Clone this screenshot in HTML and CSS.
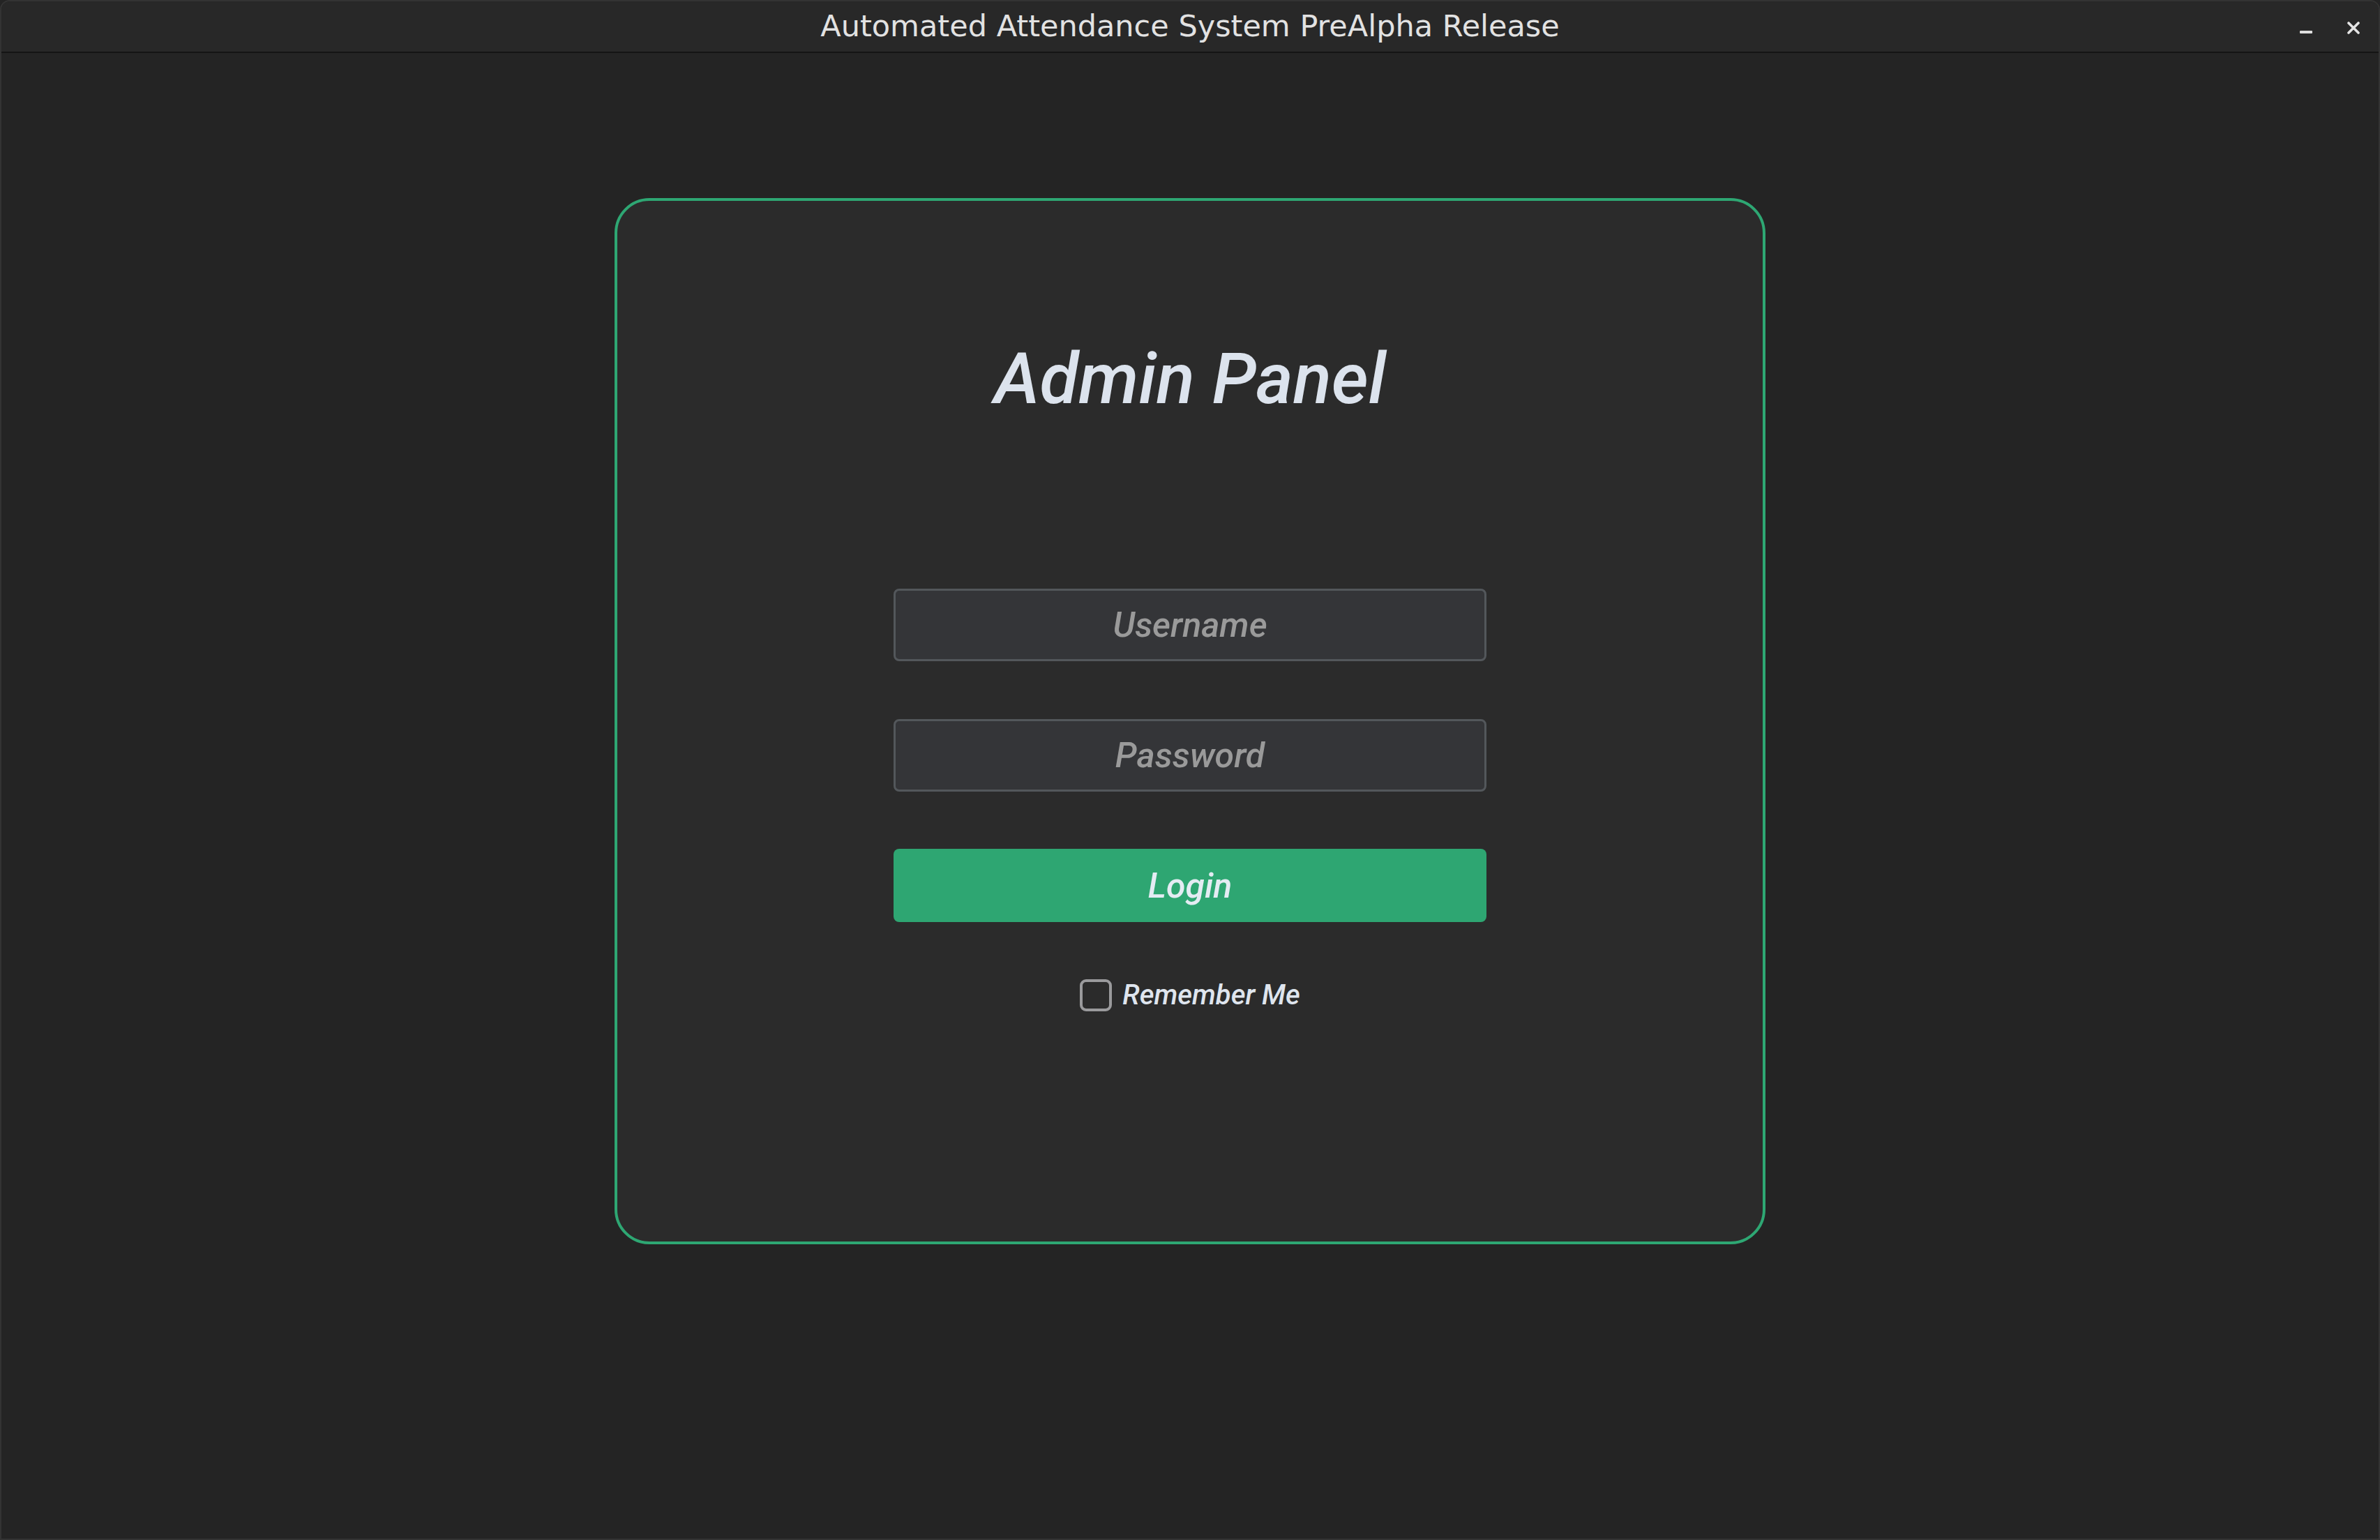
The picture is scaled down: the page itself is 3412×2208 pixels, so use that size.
FILE: index.html
```html
<!DOCTYPE html>
<html lang="en">
<head>
<meta charset="utf-8">
<title>Automated Attendance System PreAlpha Release</title>
<link rel="stylesheet" href="styles.css">
</head>
<body>
<div class="window">
  <header class="titlebar">
    <div class="spacer"></div>
    <h1 class="title">Automated Attendance System PreAlpha Release</h1>
    <div class="controls">
      <svg class="ctl" width="18" height="18" viewBox="0 0 18 18"><rect x="0" y="13" width="18" height="4" rx="1" fill="#dedede"/></svg>
      <svg class="ctl" width="18" height="18" viewBox="0 0 18 18"><path d="M2 2 L16 16 M16 2 L2 16" stroke="#e4e4e4" stroke-width="3.6" stroke-linecap="round"/></svg>
    </div>
  </header>
  <main class="content">
    <section class="card">
      <div class="heading-row"><h2 class="heading">Admin Panel</h2></div>
      <form class="form">
        <input class="field" type="text" placeholder="Username">
        <input class="field field-second" type="password" placeholder="Password">
        <button class="login" type="button">Login</button>
        <label class="remember"><span class="box"></span><span class="remember-text">Remember Me</span></label>
      </form>
    </section>
  </main>
</div>
</body>
</html>
```
FILE: styles.css
```css
html, body {
  margin: 0;
  padding: 0;
  background: #242424;
  height: 100%;
}
.window {
  box-sizing: border-box;
  height: 100vh;
  border: 2px solid #333333;
  border-radius: 14px 14px 0 0;
  background: #242424;
  overflow: hidden;
  display: flex;
  flex-direction: column;
}
.titlebar {
  flex: none;
  height: 72px;
  border-bottom: 2px solid #141414;
  background: #282828;
  display: grid;
  grid-template-columns: 1fr auto 1fr;
  align-items: center;
}
.title {
  margin: 0;
  font-family: "DejaVu Sans", sans-serif;
  font-weight: normal;
  font-size: 43px;
  color: #e2e2e2;
  letter-spacing: 0;
  padding-bottom: 2px;
}
.controls {
  justify-self: end;
  display: flex;
  align-items: center;
  gap: 50px;
  padding-right: 27px;
  padding-top: 4px;
}
.ctl { display: block; }
.content {
  flex: 1;
}
.card {
  box-sizing: border-box;
  width: 1650px;
  height: 1500px;
  margin: 208px auto 0;
  border: 4px solid #2ea773;
  border-radius: 50px;
  background: #2b2b2b;
  padding-top: 204px;
}
.heading-row {
  text-align: center;
}
.heading {
  display: inline-block;
  margin: 0;
  font-family: Roboto, "Liberation Sans", sans-serif;
  font-style: italic;
  font-weight: 500;
  font-size: 102px;
  line-height: 102px;
  color: #dce3ed;
}
.form {
  width: 850px;
  margin: 250px auto 0;
  display: flex;
  flex-direction: column;
  align-items: stretch;
}
.field {
  box-sizing: border-box;
  height: 104px;
  margin: 0;
  border: 3px solid #53575b;
  border-radius: 8px;
  background: #343538;
  text-align: center;
  font-family: Roboto, "Liberation Sans", sans-serif;
  font-style: italic;
  font-weight: 500;
  font-size: 50px;
  color: #dddddd;
  outline: none;
}
.field::placeholder {
  color: #9a9a9a;
}
.field-second {
  margin-top: 83px;
}
.login {
  box-sizing: border-box;
  height: 105px;
  margin-top: 82px;
  border: none;
  border-radius: 8px;
  background: #2ea672;
  font-family: Roboto, "Liberation Sans", sans-serif;
  font-style: italic;
  font-weight: 500;
  font-size: 50px;
  color: #e4ecf3;
  padding: 0;
}
.remember {
  margin-top: 81px;
  display: flex;
  justify-content: center;
  align-items: center;
  gap: 15px;
  font-family: Roboto, "Liberation Sans", sans-serif;
  font-style: italic;
  font-weight: 500;
  font-size: 40px;
  color: #dfe5ee;
}
.box {
  box-sizing: border-box;
  width: 46px;
  height: 46px;
  border: 4px solid #9a9a9c;
  border-radius: 9px;
}
```
